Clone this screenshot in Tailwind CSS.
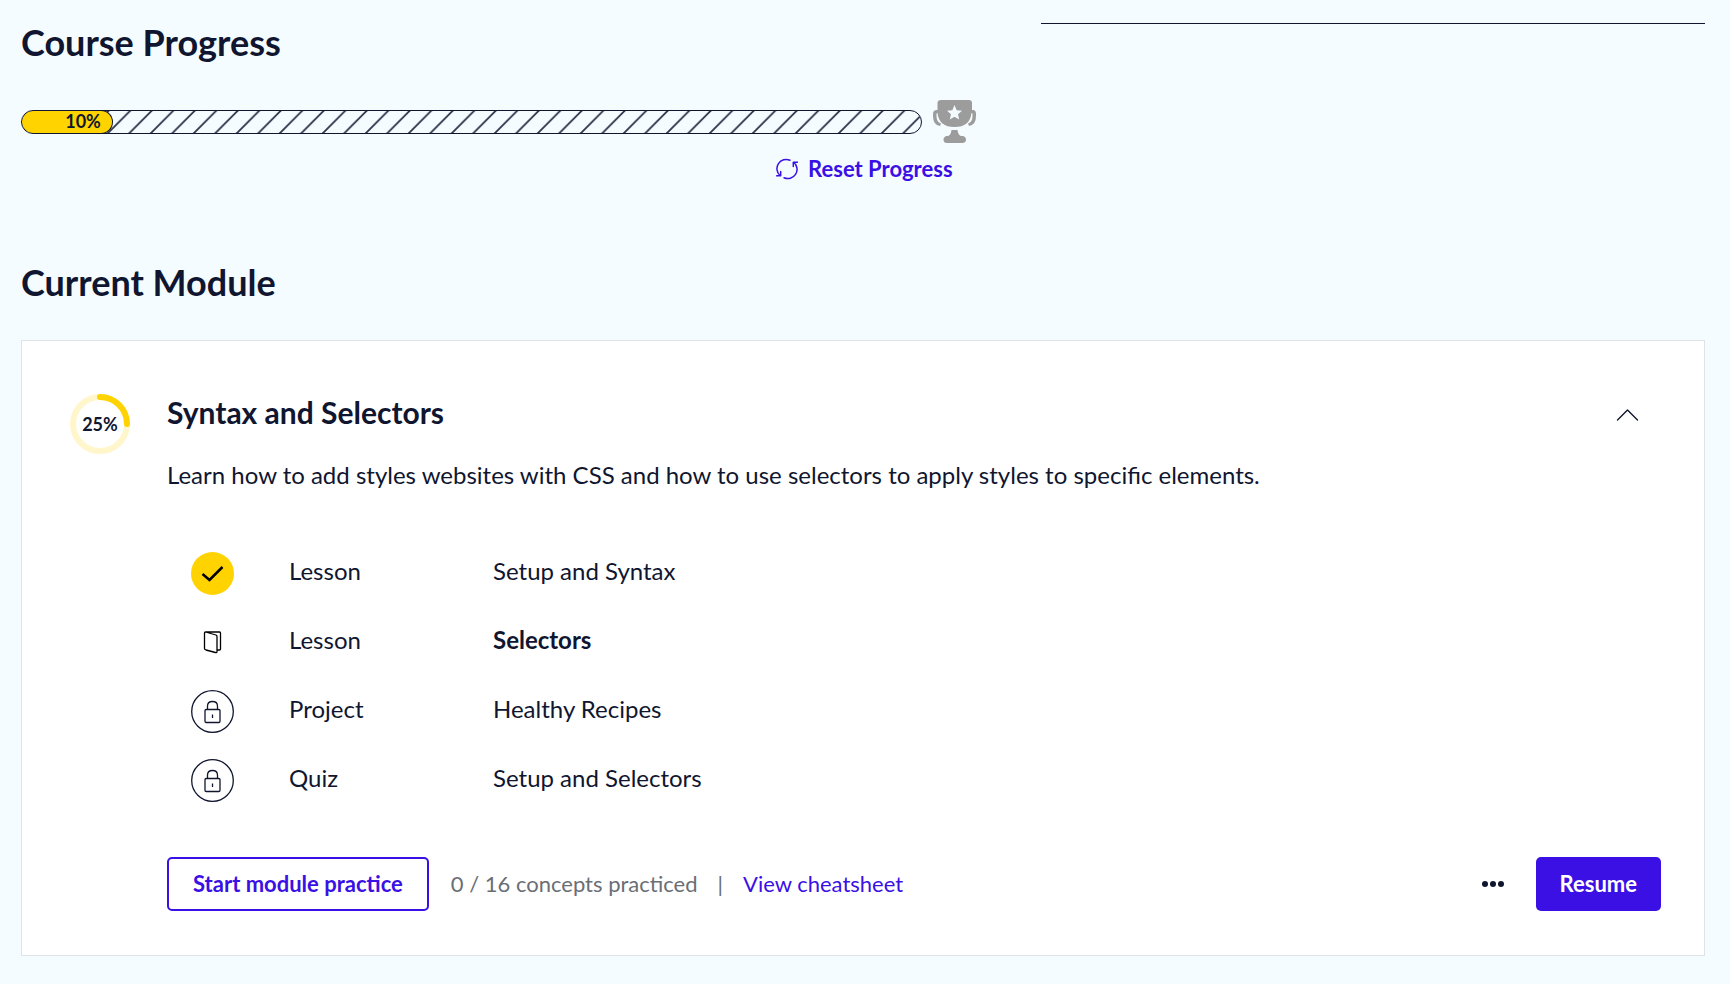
<!DOCTYPE html>
<html lang="en">
<head>
<meta charset="utf-8">
<meta name="viewport" content="width=device-width, initial-scale=1">
<title>Course Progress</title>
<script src="https://cdn.jsdelivr.net/npm/@tailwindcss/browser@4"></script>
</head>
<body class="min-h-screen bg-[#f5fcff] font-[Lato,sans-serif] text-[#10162f]">
<main class="pt-[23px] pr-[25px] pb-7 pl-[21px]">
  <div class="grid grid-cols-[954fr_664fr] gap-x-[65px]">
    <section>
      <h2 class="text-[36px] leading-[38px] font-bold">Course Progress</h2>
      <div class="mt-[39px] flex items-center gap-[11px]">
        <div class="relative h-6 flex-1 overflow-hidden rounded-full border border-[#10162f]" role="progressbar" aria-label="Course progress" aria-valuenow="10" aria-valuemin="0" aria-valuemax="100">
          <svg class="absolute inset-0 size-full" aria-hidden="true">
            <defs>
              <pattern id="stripes" width="21.5" height="22" patternUnits="userSpaceOnUse">
                <path d="M-23.5 24 L2.5 -2 M-2 24 L24 -2 M19.5 24 L45.5 -2" stroke="#10162f" stroke-width="1.9" stroke-opacity=".85"/>
              </pattern>
            </defs>
            <rect width="100%" height="100%" fill="url(#stripes)"/>
          </svg>
          <div class="relative h-full rounded-full bg-[#ffd300] pr-[11px] text-right text-[18px] leading-5 font-bold shadow-[0_0_0_1px_#10162f]" style="width:10%">10%</div>
        </div>
        <svg class="size-[43px] shrink-0" viewBox="0 0 43 43" fill="#9c9c9c" aria-hidden="true">
          <path d="M8 0H36Q39 0 39 3V10H40Q43 10 43 14V16Q43 25 36 26L35 23.500Q39.500 22 39.500 16V14Q39.500 13 38.500 13Q37 27 21.500 27Q6 27 4.500 13Q3.500 13 3.500 14V16Q3.500 22 8 23.500L7 26Q0 25 0 16V14Q0 10 4 10H4.500V3Q4.500 0 8 0Z"/>
          <path d="M21.500 5L23.700 10.200L29 10.700L25 14.200L26.200 19.500L21.500 16.700L16.800 19.500L18 14.200L14 10.700L19.300 10.200Z" fill="#f5fcff"/>
          <path d="M18.500 30H24.500Q25 35 28 36H30Q33 37 33 39.500Q33 43 29 43H14Q10.500 43 10.500 39.500Q10.500 37 13.500 36H15Q18 35 18.500 30Z"/>
        </svg>
      </div>
      <div class="mt-3 flex justify-end pr-[23px]">
        <button type="button" class="flex items-center gap-[10px] text-[22px] leading-7 font-bold text-[#3a10e5]">
          <svg class="size-[22px]" viewBox="0 0 22 22" fill="none" stroke="#3a10e5" stroke-width="1.500" stroke-linecap="round" stroke-linejoin="round" aria-hidden="true">
            <path d="M14 2.300A9.200 9.200 0 0 0 4 17.500M8 19.700A9.200 9.200 0 0 0 18 4.500M17.300 8.500V4.200H21.500M4.700 13.500V17.800H.7"/>
          </svg>
          Reset Progress
        </button>
      </div>
    </section>
    <hr class="border-t border-[#10162f]">
  </div>

  <h2 class="mt-[79px] text-[36px] leading-10 font-bold">Current Module</h2>

  <section class="mt-[38px] border border-[#dfe3e6] bg-white pt-[53px] pr-[43px] pb-11 pl-12">
    <div class="flex gap-[37px]">
      <div class="relative flex size-[60px] shrink-0 items-center justify-center" role="progressbar" aria-label="Module progress" aria-valuenow="25" aria-valuemin="0" aria-valuemax="100">
        <svg class="absolute inset-0 size-full" viewBox="0 0 60 60" fill="none" stroke-width="6" stroke-linecap="round" aria-hidden="true">
          <circle cx="30" cy="30" r="27" stroke="#fff6cc"/>
          <path d="M30 3A27 27 0 0 1 57 30" stroke="#ffd300"/>
        </svg>
        <span class="relative text-[18px] leading-6 font-bold">25%</span>
      </div>
      <div class="flex-1">
        <div class="flex items-start justify-between pr-[22px]">
          <h3 class="text-[30px] leading-9 font-bold">Syntax and Selectors</h3>
          <button type="button" class="flex h-[42px] items-center" aria-label="Collapse module">
            <svg class="h-3 w-[23px]" viewBox="0 0 23 12" fill="none" stroke="#10162f" stroke-width="1.400" stroke-linecap="round" stroke-linejoin="round" aria-hidden="true"><path d="M1.500 11L11.500 1L21.500 11"/></svg>
          </button>
        </div>
        <p class="mt-[21px] text-[24px] leading-9">Learn how to add styles websites with CSS and how to use selectors to apply styles to specific elements.</p>
        <ul class="mt-[59px] flex flex-col gap-[26px] pl-6 text-[24px] leading-[38px]">
          <li class="grid grid-cols-[43px_149px_1fr] items-start gap-x-[55px]">
            <svg class="size-[43px]" viewBox="0 0 43 43" fill="none" role="img" aria-label="Completed"><circle cx="21.500" cy="21.500" r="21.500" fill="#ffd300"/><path d="M11.500 22L18.500 28L31.500 15" stroke="#000" stroke-width="2.500"/></svg>
            <span>Lesson</span><a href="#">Setup and Syntax</a>
          </li>
          <li class="grid grid-cols-[43px_149px_1fr] items-start gap-x-[55px]">
            <svg class="size-[43px]" viewBox="0 0 43 43" fill="none" stroke="#000" stroke-width="1.300" stroke-linejoin="round" role="img" aria-label="In progress"><path d="M13.500 12Q13.500 11 14.500 11L25 14Q26 14.500 26 15.500V30.500Q26 32 24.500 31.500L15 29Q13.500 28.500 13.500 27.500ZM14.500 11H28.500Q29.500 11 29.500 12V28Q29.500 29 28.500 29H26"/></svg>
            <span>Lesson</span><a href="#" class="font-bold">Selectors</a>
          </li>
          <li class="grid grid-cols-[43px_149px_1fr] items-start gap-x-[55px]">
            <svg class="size-[43px]" viewBox="0 0 43 43" fill="none" stroke="#10162f" stroke-width="1.300" role="img" aria-label="Locked"><circle cx="21.500" cy="21.500" r="20.800"/><rect x="14" y="19.500" width="15" height="13" rx="1.200"/><path d="M16.500 19.500V16Q16.500 11.500 21.500 11.500Q26.500 11.500 26.500 16V19.500M21.500 24.500V28"/></svg>
            <span>Project</span><span>Healthy Recipes</span>
          </li>
          <li class="grid grid-cols-[43px_149px_1fr] items-start gap-x-[55px]">
            <svg class="size-[43px]" viewBox="0 0 43 43" fill="none" stroke="#10162f" stroke-width="1.300" role="img" aria-label="Locked"><circle cx="21.500" cy="21.500" r="20.800"/><rect x="14" y="19.500" width="15" height="13" rx="1.200"/><path d="M16.500 19.500V16Q16.500 11.500 21.500 11.500Q26.500 11.500 26.500 16V19.500M21.500 24.500V28"/></svg>
            <span>Quiz</span><span>Setup and Selectors</span>
          </li>
        </ul>
        <div class="mt-[55px] flex items-center text-[22px] leading-7">
          <button type="button" class="h-[54px] rounded-[5px] border-2 border-[#3a10e5] px-6 font-bold text-[#3a10e5]">Start module practice</button>
          <span class="ml-[22px] text-[#6a6e75]">0 / 16 concepts practiced</span>
          <span class="mx-5 text-[#6a6e75]">|</span>
          <a href="#" class="text-[#3a10e5]">View cheatsheet</a>
          <button type="button" class="ml-auto" aria-label="More options">
            <svg class="h-6 w-[22px]" viewBox="0 0 22 24" fill="#10162f" aria-hidden="true"><circle cx="3" cy="12" r="3"/><circle cx="11" cy="12" r="3"/><circle cx="19" cy="12" r="3"/></svg>
          </button>
          <button type="button" class="ml-8 h-[54px] rounded-[5px] bg-[#3a10e5] px-6 font-bold text-white">Resume</button>
        </div>
      </div>
    </div>
  </section>
</main>
</body>
</html>
